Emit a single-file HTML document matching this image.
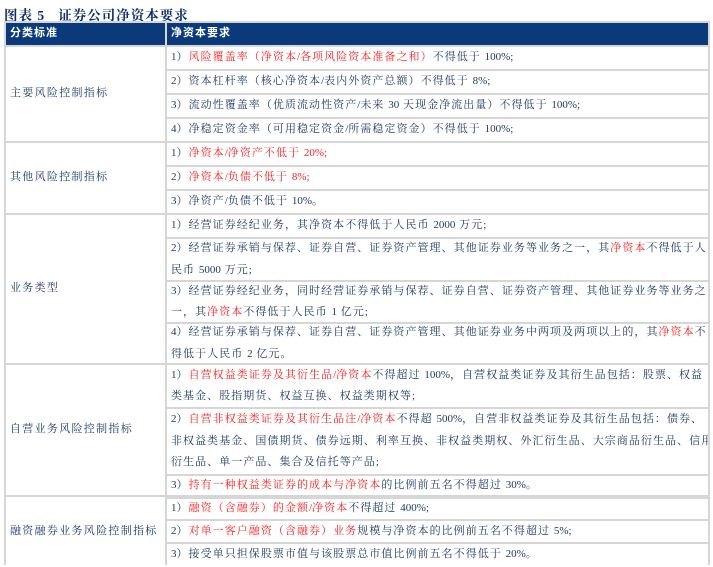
<!DOCTYPE html>
<html><head><meta charset="utf-8"><style>
body{margin:0;width:713px;height:565px;overflow:hidden;background:#fff;font-family:"Liberation Serif","Noto Serif CJK SC",serif;}
.t{position:absolute;left:4px;top:4px;font-size:13.5px;font-weight:bold;color:#0b2d6b;font-family:"Liberation Serif","Noto Serif CJK SC",serif;letter-spacing:1px}
.tb{position:absolute;left:4px;top:21px;width:706px;height:544px;background:#d6d6d6}
.c{position:absolute;background:#fff;color:#1f3a68;font-size:11px;letter-spacing:1.05px;line-height:21.5px;display:flex;align-items:center;box-sizing:border-box;padding-left:4px;padding-right:0;white-space:nowrap;overflow:hidden}
.c>div{display:block}
.l{white-space:nowrap;letter-spacing:1.3px}
.h{background:#0a3a7a;color:#fff;font-weight:bold;font-family:"Liberation Sans","Noto Sans CJK SC",sans-serif;letter-spacing:1px}
.r{color:#ff2020}
i{font-style:normal;letter-spacing:0}
</style></head><body>
<div class="t">图表 5&nbsp;&nbsp;&nbsp;证券公司净资本要求</div>
<div class="tb"></div>
<div class="c h" style="left:6px;top:23px;width:159px;height:22px"><div>分类标准</div></div>
<div class="c h" style="left:167px;top:23px;width:541px;height:22px"><div>净资本要求</div></div>

<div class="c l" style="left:6px;top:47px;width:159px;height:94px"><div>主要风险控制指标</div></div>
<div class="c" style="left:167px;top:47px;width:541px;height:22px"><div><i>1</i>）<span class="r">风险覆盖率（净资本<i>/</i>各项风险资本准备之和）</span>不得低于 <i>100%;</i></div></div>
<div class="c" style="left:167px;top:71px;width:541px;height:22px"><div><i>2</i>）资本杠杆率（核心净资本<i>/</i>表内外资产总额）不得低于 <i>8%;</i></div></div>
<div class="c" style="left:167px;top:95px;width:541px;height:22px"><div><i>3</i>）流动性覆盖率（优质流动性资产<i>/</i>未来 <i>30</i> 天现金净流出量）不得低于 <i>100%;</i></div></div>
<div class="c" style="left:167px;top:119px;width:541px;height:22px"><div><i>4</i>）净稳定资金率（可用稳定资金<i>/</i>所需稳定资金）不得低于 <i>100%;</i></div></div>

<div class="c l" style="left:6px;top:143px;width:159px;height:70px"><div>其他风险控制指标</div></div>
<div class="c" style="left:167px;top:143px;width:541px;height:22px"><div><i>1</i>）<span class="r">净资本<i>/</i>净资产不低于 <i>20%;</i></span></div></div>
<div class="c" style="left:167px;top:167px;width:541px;height:22px"><div><i>2</i>）<span class="r">净资本<i>/</i>负债不低于 <i>8%;</i></span></div></div>
<div class="c" style="left:167px;top:191px;width:541px;height:22px"><div><i>3</i>）净资产<i>/</i>负债不低于 <i>10%</i>。</div></div>

<div class="c l" style="left:6px;top:215px;width:159px;height:148px"><div>业务类型</div></div>
<div class="c" style="left:167px;top:215px;width:541px;height:22px"><div><i>1</i>）经营证券经纪业务，其净资本不得低于人民币 <i>2000</i> 万元;</div></div>
<div class="c" style="left:167px;top:239px;width:541px;height:41px"><div><i>2</i>）经营证券承销与保荐、证券自营、证券资产管理、其他证券业务等业务之一，其<span class="r">净资本</span>不得低于人<br>民币 <i>5000</i> 万元;</div></div>
<div class="c" style="left:167px;top:282px;width:541px;height:40px"><div><i>3</i>）经营证券经纪业务，同时经营证券承销与保荐、证券自营、证券资产管理、其他证券业务等业务之<br>一，其<span class="r">净资本</span>不得低于人民币 <i>1</i> 亿元;</div></div>
<div class="c" style="left:167px;top:324px;width:541px;height:39px"><div><i>4</i>）经营证券承销与保荐、证券自营、证券资产管理、其他证券业务中两项及两项以上的，其<span class="r">净资本</span>不<br>得低于人民币 <i>2</i> 亿元。</div></div>

<div class="c l" style="left:6px;top:365px;width:159px;height:130px"><div>自营业务风险控制指标</div></div>
<div class="c" style="left:167px;top:365px;width:541px;height:42px"><div><i>1</i>）<span class="r">自营权益类证券及其衍生品<i>/</i>净资本</span>不得超过 <i>100%</i>，自营权益类证券及其衍生品包括：股票、权益<br>类基金、股指期货、权益互换、权益类期权等;</div></div>
<div class="c" style="left:167px;top:409px;width:541px;height:65px"><div><i>2</i>）<span class="r">自营非权益类证券及其衍生品注<i>/</i>净资本</span>不得超 <i>500%</i>，自营非权益类证券及其衍生品包括：债券、<br>非权益类基金、国债期货、债券远期、利率互换、非权益类期权、外汇衍生品、大宗商品衍生品、信用<br>衍生品、单一产品、集合及信托等产品;</div></div>
<div class="c" style="left:167px;top:476px;width:541px;height:19px"><div><i>3</i>）<span class="r">持有一种权益类证券的成本与净资本</span>的比例前五名不得超过 <i>30%</i>。</div></div>

<div class="c l" style="left:6px;top:497px;width:159px;height:70px"><div>融资融券业务风险控制指标</div></div>
<div class="c" style="left:167px;top:499px;width:541px;height:20px"><div><i>1</i>）<span class="r">融资（含融券）的金额<i>/</i>净资本</span>不得超过 <i>400%;</i></div></div>
<div class="c" style="left:167px;top:521px;width:541px;height:21px"><div><i>2</i>）<span class="r">对单一客户融资（含融券）业务</span>规模与净资本的比例前五名不得超过 <i>5%;</i></div></div>
<div class="c" style="left:167px;top:544px;width:541px;height:21px"><div><i>3</i>）接受单只担保股票市值与该股票总市值比例前五名不得低于 <i>20%</i>。</div></div>
</body></html>
